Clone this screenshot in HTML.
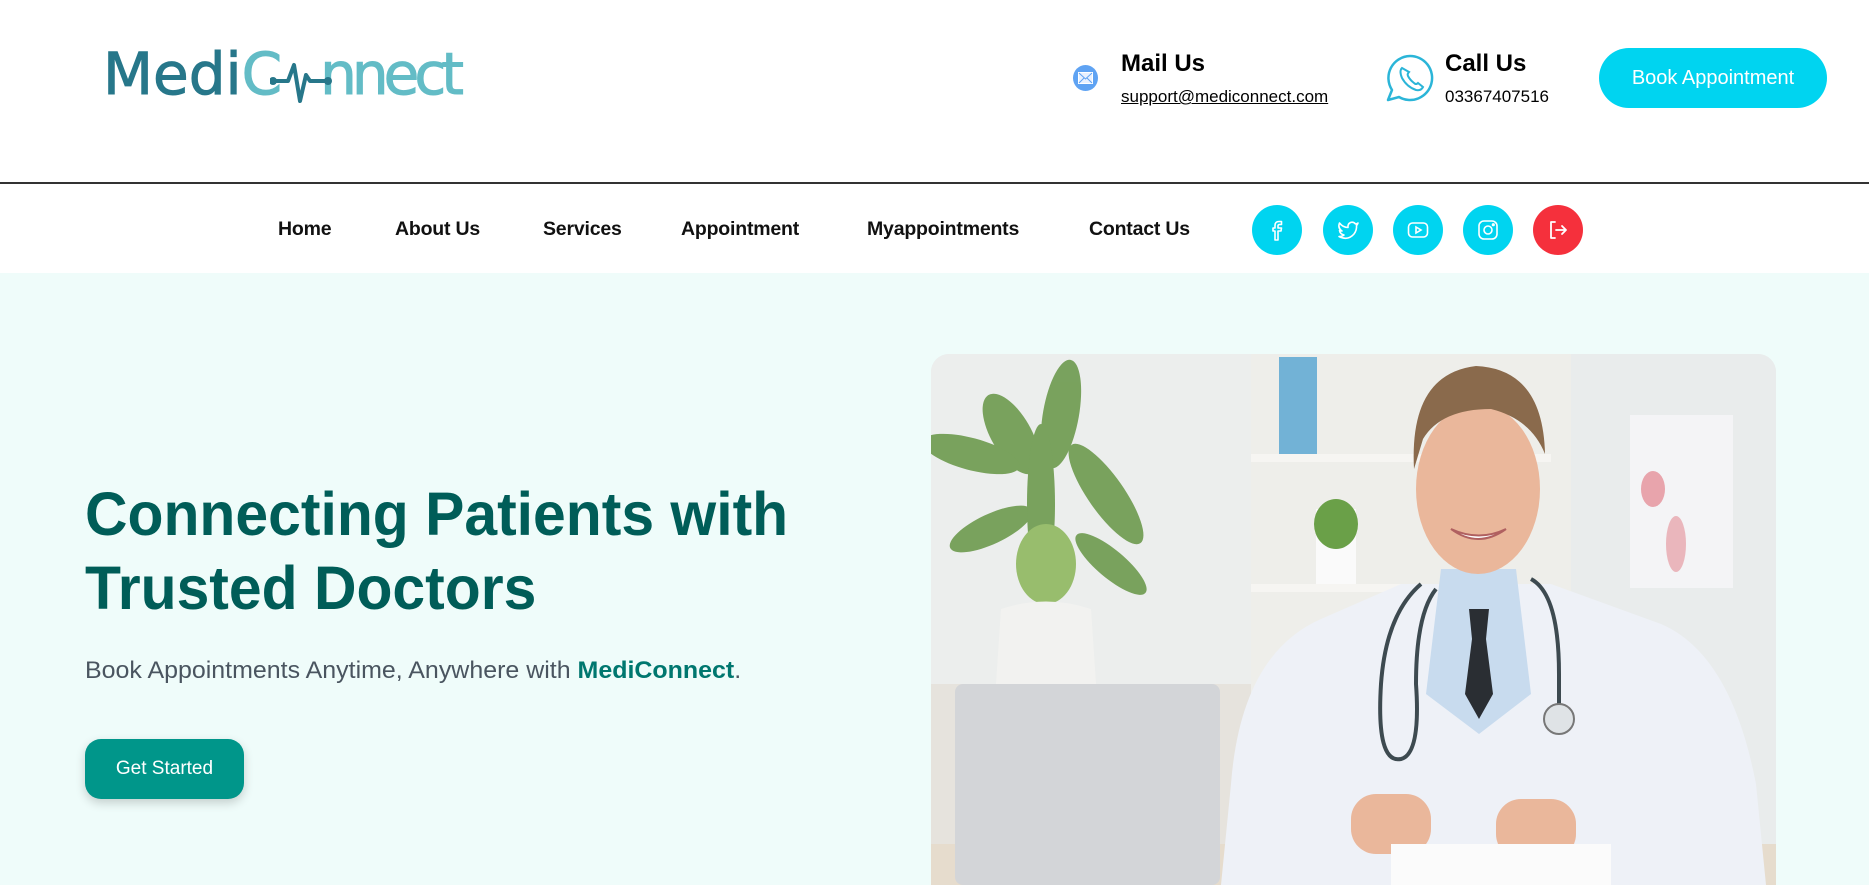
<!DOCTYPE html>
<html><head><meta charset="utf-8"><style>
*{margin:0;padding:0;box-sizing:border-box}
body{width:1869px;height:885px;overflow:hidden;background:#fff;font-family:"Liberation Sans",sans-serif;position:relative}
.a{position:absolute}
.nav{top:218px;font-size:19.5px;font-weight:bold;color:#111;white-space:nowrap;letter-spacing:-0.2px}
.ci{position:absolute;top:205px;width:50px;height:50px;border-radius:50%;background:#00d4f0;display:flex;align-items:center;justify-content:center}
</style></head><body>
<!-- logo -->
<div class="a" style="left:103px;top:40px;font-size:58px;color:#27778a;font-family:'DejaVu Sans','Liberation Sans',sans-serif;white-space:nowrap;-webkit-text-stroke:1px currentColor">Medi<span style="color:#63bcc6">C</span><span style="display:inline-block;width:38px"></span><span style="color:#63bcc6;letter-spacing:-5px">nnect</span></div>
<svg class="a" style="left:270px;top:60px" width="70" height="50" viewBox="0 0 70 50"><path d="M2 21 H18 L24 5 L30 41 L36 15 L40 21 H58" fill="none" stroke="#27778a" stroke-width="4" stroke-linecap="round" stroke-linejoin="round"/><circle cx="3" cy="21" r="4" fill="#27778a"/><circle cx="58" cy="21" r="4" fill="#27778a"/></svg>
<!-- mail -->
<div class="a" style="left:1073px;top:65px;width:25px;height:26px;border-radius:50%;background:#5fa3f3"></div>
<svg class="a" style="left:1078px;top:72px" width="15" height="12" viewBox="0 0 15 12"><rect x="0.5" y="0.5" width="14" height="11" fill="#e8f1ff" stroke="#fff"/><path d="M1 1 L7.5 7 L14 1 M1 11 L6 6 M14 11 L9 6" stroke="#5fa3f3" fill="none" stroke-width="1"/></svg>
<div class="a" style="left:1121px;top:50px;font-size:24px;font-weight:bold;color:#000">Mail Us</div>
<div class="a" style="left:1121px;top:87px;font-size:17px;color:#000;text-decoration:underline">support@mediconnect.com</div>
<!-- whatsapp -->
<svg class="a" style="left:1385px;top:53px" width="50" height="52" viewBox="0 0 50 52"><path d="M25 3 A22 22 0 1 1 14 44 L3 47 L7 37 A22 22 0 0 1 25 3 Z" fill="none" stroke="#2bb5d8" stroke-width="2.5" stroke-linejoin="round"/><path d="M17 15 q-3 3 0 10 q5 9 14 12 q5 1 7-3 l-5-4 q-2 2-4 0 q-4-3-6-7 q-1-2 1-4 z" fill="none" stroke="#2bb5d8" stroke-width="2"/></svg>
<div class="a" style="left:1445px;top:50px;font-size:24px;font-weight:bold;color:#000">Call Us</div>
<div class="a" style="left:1445px;top:87px;font-size:17px;color:#000">03367407516</div>
<div class="a" style="left:1599px;top:48px;width:228px;height:60px;border-radius:30px;background:#00d4f0;color:#fff;font-size:20px;display:flex;align-items:center;justify-content:center">Book Appointment</div>
<div class="a" style="left:0;top:182px;width:1869px;height:2px;background:#333"></div>
<!-- nav -->
<div class="a nav" style="left:278px">Home</div>
<div class="a nav" style="left:395px">About Us</div>
<div class="a nav" style="left:543px">Services</div>
<div class="a nav" style="left:681px">Appointment</div>
<div class="a nav" style="left:867px">Myappointments</div>
<div class="a nav" style="left:1089px">Contact Us</div>
<div class="ci" style="left:1252px"><svg width="24" height="24" viewBox="0 0 24 24" fill="none" stroke="#fff" stroke-width="1.6" stroke-linejoin="round"><path d="M13 22 V13 H16 L16.5 10 H13 V8 Q13 6.5 14.5 6.5 H16.5 V3.5 H14 Q10 3.5 10 7.5 V10 H8 V13 H10 V22 Z"/></svg></div>
<div class="ci" style="left:1323px"><svg width="26" height="24" viewBox="0 0 24 24" fill="none" stroke="#fff" stroke-width="1.6" stroke-linejoin="round"><path d="M22 5 Q20.5 6 19.5 6 Q17.5 3.5 14.5 4.5 Q11.5 6 12 9.5 Q7 9.5 3.5 5 Q1.5 10 6 13 Q4.5 13 3.5 12.5 Q4 16 8 17 Q6 18.5 3 18.5 Q12 23 18 16 Q21 12 20.5 7.5 Q21.5 6.5 22 5 Z"/></svg></div>
<div class="ci" style="left:1393px"><svg width="24" height="24" viewBox="0 0 24 24" fill="none" stroke="#fff" stroke-width="1.6"><rect x="2.5" y="5" width="19" height="14" rx="4"/><path d="M10 9 L15 12 L10 15 Z"/></svg></div>
<div class="ci" style="left:1463px"><svg width="24" height="24" viewBox="0 0 24 24" fill="none" stroke="#fff" stroke-width="1.6"><rect x="3" y="3" width="18" height="18" rx="5"/><circle cx="12" cy="12" r="4"/><circle cx="17.3" cy="6.7" r="0.8" fill="#fff"/></svg></div>
<div class="ci" style="left:1533px;background:#f5303c"><svg width="24" height="24" viewBox="0 0 24 24" fill="none" stroke="#fff" stroke-width="1.8" stroke-linecap="round" stroke-linejoin="round"><path d="M9 4 H5 V20 H9 M10 12 H20 M16 8 L20 12 L16 16"/></svg></div>
<!-- hero -->
<div class="a" style="left:0;top:273px;width:1869px;height:612px;background:#effcfa"></div>
<div class="a" style="left:85px;top:477px;font-size:61px;font-weight:bold;color:#005d58;line-height:74px;transform:scaleX(0.965);transform-origin:left top;white-space:nowrap">Connecting Patients with<br>Trusted Doctors</div>
<div class="a" style="left:85px;top:657px;font-size:24px;color:#4a5560;white-space:nowrap;transform:scaleX(1.04);transform-origin:left top">Book Appointments Anytime, Anywhere with <span style="color:#00776f;font-weight:bold">MediConnect</span>.</div>
<div class="a" style="left:85px;top:739px;width:159px;height:60px;border-radius:16px;background:#00968a;color:#fff;font-size:19px;display:flex;align-items:center;justify-content:center;box-shadow:0 4px 10px rgba(0,0,0,0.18)">Get Started</div>
<!-- image -->
<div class="a" style="left:931px;top:354px;width:845px;height:531px;border-radius:18px 18px 0 0;overflow:hidden">
<svg width="845" height="531" viewBox="0 0 845 531">
<rect width="845" height="531" fill="#e6eaea"/>
<rect x="0" y="0" width="320" height="531" fill="#eceeed"/>
<rect x="640" y="0" width="205" height="531" fill="#e9ecec"/>
<rect x="320" y="0" width="320" height="531" fill="#eeeeea"/>
<rect x="348" y="3" width="38" height="100" fill="#72b2d6"/>
<rect x="320" y="100" width="300" height="8" fill="#f6f5f2"/>
<rect x="320" y="230" width="300" height="8" fill="#f6f5f2"/>
<rect x="385" y="155" width="40" height="75" fill="#fafafa"/>
<ellipse cx="405" cy="170" rx="22" ry="25" fill="#6aa048"/>
<rect x="699" y="61" width="103" height="173" fill="#f4f4f6"/>
<ellipse cx="722" cy="135" rx="12" ry="18" fill="#e8a4ac"/>
<ellipse cx="745" cy="190" rx="10" ry="28" fill="#eab6bc"/>
<g fill="#6d9a4e" opacity="0.9">
<ellipse cx="130" cy="60" rx="18" ry="55" transform="rotate(10 130 60)"/>
<ellipse cx="80" cy="80" rx="20" ry="45" transform="rotate(-30 80 80)"/>
<ellipse cx="40" cy="100" rx="50" ry="16" transform="rotate(15 40 100)"/>
<ellipse cx="175" cy="140" rx="18" ry="60" transform="rotate(-35 175 140)"/>
<ellipse cx="60" cy="175" rx="45" ry="15" transform="rotate(-25 60 175)"/>
<ellipse cx="180" cy="210" rx="45" ry="14" transform="rotate(40 180 210)"/>
<ellipse cx="110" cy="150" rx="14" ry="80"/>
<ellipse cx="115" cy="210" rx="30" ry="40" fill="#8fb860"/>
</g>
<path d="M70 255 Q115 240 160 255 L165 330 L65 330 Z" fill="#f2f2f0"/>
<rect x="0" y="330" width="320" height="201" fill="#e6e3dd"/>
<rect x="0" y="490" width="845" height="41" fill="#e6dccd"/>
<rect x="24" y="330" width="265" height="201" rx="8" fill="#d3d5d8"/>
<path d="M290 531 L300 430 Q310 300 390 265 L470 230 L620 230 L730 270 Q800 300 825 430 L835 531 Z" fill="#eef1f7"/>
<path d="M510 215 L585 215 L600 340 L548 380 L495 340 Z" fill="#c8dbee"/>
<path d="M538 255 L558 255 L555 285 L562 340 L548 365 L534 340 L541 285 Z" fill="#2a2e33"/>
<path d="M490 230 Q455 260 450 330 Q445 410 470 405 Q490 400 485 330 Q485 260 505 235" fill="none" stroke="#3d4a50" stroke-width="4"/>
<path d="M600 225 Q628 240 628 320 L628 350" fill="none" stroke="#3d4a50" stroke-width="4"/>
<circle cx="628" cy="365" r="15" fill="#dfe3e6" stroke="#777" stroke-width="2"/>
<ellipse cx="547" cy="135" rx="62" ry="85" fill="#eab79b"/>
<path d="M483 115 Q478 20 545 12 Q612 15 614 100 Q600 65 560 55 Q510 55 492 85 Z" fill="#8a6a4c"/>
<path d="M520 175 Q547 195 575 175 Q548 188 520 175 Z" fill="#fff" stroke="#b06060" stroke-width="2"/>
<rect x="420" y="440" width="80" height="60" rx="25" fill="#eab79b"/>
<rect x="565" y="445" width="80" height="60" rx="25" fill="#eab79b"/>
<rect x="460" y="490" width="220" height="41" fill="#fbfbfb"/>
</svg>
</div>
</body></html>
